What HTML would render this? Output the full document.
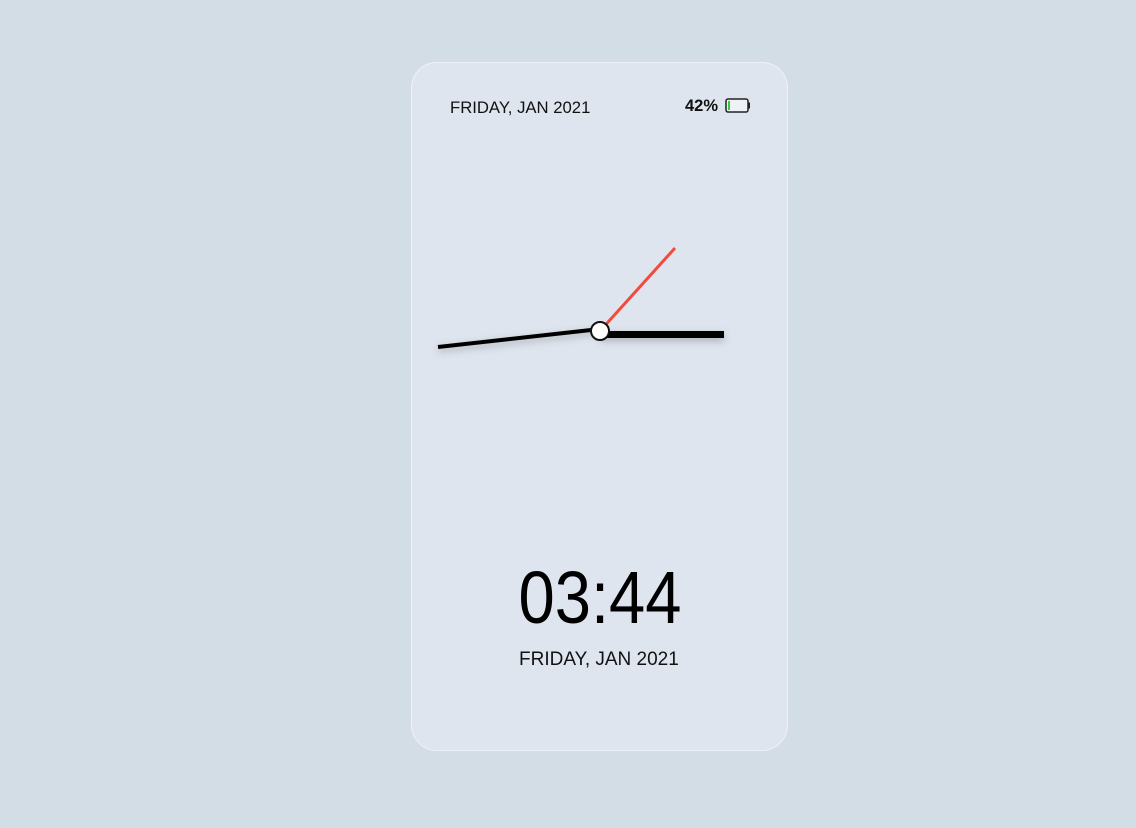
<!DOCTYPE html>
<html><head><style>
html,body{margin:0;padding:0;width:1136px;height:828px;background:#d3dde6;overflow:hidden;font-family:"Liberation Sans",sans-serif;}
.card{position:absolute;left:411px;top:62px;width:375px;height:687px;border:1px solid #eef2f7;border-radius:26px;background:#dfe5ee;}
.t{position:absolute;color:#111;}
</style></head><body>
<div class="card"></div>
<div class="t" style="left:450px;top:98px;font-size:16.7px;">FRIDAY, JAN 2021</div>
<div class="t" style="left:685px;top:97px;font-size:16.5px;font-weight:bold;">42%</div>
<svg style="position:absolute;left:724px;top:97px" width="28" height="18">
<rect x="2" y="2" width="22" height="13" rx="2" fill="#eef1f6" stroke="#222" stroke-width="1.5"/>
<rect x="24" y="5.5" width="2" height="6" fill="#222"/>
<rect x="4" y="4" width="2" height="9" fill="#3c3"/>
</svg>
<svg style="position:absolute;left:0;top:0" width="1136" height="828">
<defs><filter id="s" filterUnits="userSpaceOnUse" x="400" y="280" width="360" height="110"><feDropShadow dx="0" dy="3" stdDeviation="4" flood-color="#000" flood-opacity="0.25"/></filter></defs>
<rect x="600" y="331" width="124" height="7" fill="#000" filter="url(#s)"/>
<line x1="600" y1="329" x2="438" y2="347" stroke="#000" stroke-width="4" filter="url(#s)"/>
<line x1="600" y1="331" x2="675" y2="248" stroke="#f44a3e" stroke-width="3"/>
<circle cx="600" cy="331" r="9" fill="#fff" stroke="#111" stroke-width="2"/>
</svg>
<div class="t" style="left:600px;top:555px;font-size:74px;transform:translateX(-50%) scaleX(0.88);white-space:nowrap;color:#000;">03:44</div>
<div class="t" style="left:519px;top:649px;font-size:19px;">FRIDAY, JAN 2021</div>
</body></html>
